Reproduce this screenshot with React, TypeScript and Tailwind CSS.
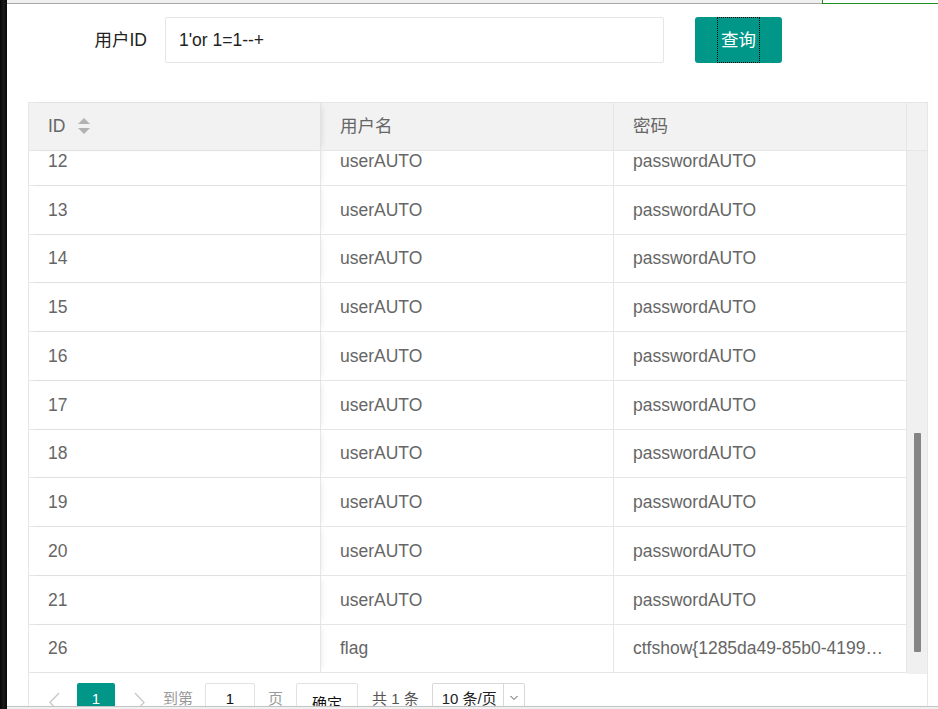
import React from "react";

const rows: [string, string, string][] = [
  ["12", "userAUTO", "passwordAUTO"],
  ["13", "userAUTO", "passwordAUTO"],
  ["14", "userAUTO", "passwordAUTO"],
  ["15", "userAUTO", "passwordAUTO"],
  ["16", "userAUTO", "passwordAUTO"],
  ["17", "userAUTO", "passwordAUTO"],
  ["18", "userAUTO", "passwordAUTO"],
  ["19", "userAUTO", "passwordAUTO"],
  ["20", "userAUTO", "passwordAUTO"],
  ["21", "userAUTO", "passwordAUTO"],
  ["26", "flag", "ctfshow{1285da49-85b0-4199…"],
];

function SortIcon() {
  return (
    <svg width="12" height="17" viewBox="0 0 12 17" className="ml-[12px]">
      <polygon points="6,0 12,6 0,6" fill="#b2b2b2" />
      <polygon points="0,10 12,10 6,16" fill="#b2b2b2" />
    </svg>
  );
}

function Chevron({ dir }: { dir: "l" | "r" }) {
  return (
    <svg width="11" height="22" viewBox="0 0 11 22" className="mt-[9px] shrink-0">
      <polyline
        points={dir === "l" ? "10,1 1,10.5 10,20" : "1,1 10,10.5 1,20"}
        fill="none"
        stroke="#c8c8c8"
        strokeWidth="1.3"
      />
    </svg>
  );
}

export default function App() {
  return (
    <div className="w-[938px] h-[709px] overflow-hidden flex bg-white font-['Liberation_Sans','Noto_Sans_CJK_SC',sans-serif]">
      <div className="w-[7px] shrink-0 bg-[linear-gradient(90deg,#050505,#1a1a1a_50%,#080808)]" />
      <div className="flex-1 flex flex-col min-w-0">
        {/* top strip */}
        <div className="h-[4px] flex shrink-0">
          <div className="w-[815px] bg-[#f0f0f0] border-b border-[#a8a8a8]" />
          <div className="flex-1 border-l border-b border-[#1f8f1f] bg-white" />
        </div>

        {/* content */}
        <div className="flex-1 min-h-0 overflow-hidden">
          {/* form row */}
          <div className="flex items-center mt-[13px] h-[46px]">
            <label className="w-[158px] pr-[18px] text-right text-[17.5px] text-[#222]">
              用户ID
            </label>
            <div className="w-[499px] h-[46px] border border-[#e6e6e6] rounded-[2px] flex items-center pl-[13px] text-[17.5px] text-[#222]">
              1'or 1=1--+
            </div>
            <button className="ml-[31px] w-[87px] h-[46px] bg-[#009688] rounded-[3px] text-white text-[17.5px] flex justify-center">
              <span className="h-full flex items-center px-[3px] border border-dotted border-black">
                查询
              </span>
            </button>
          </div>

          {/* table */}
          <div className="ml-[21px] mt-[39px] w-[900px] border-l border-r border-t border-[#e6e6e6] text-[17.5px] text-[#666]">
            {/* header */}
            <div className="flex h-[48px] bg-[#f2f2f2] border-b border-[#e6e6e6]">
              <div className="w-[292px] border-r border-[#e2e2e2] pl-[19px] flex items-center relative z-10 shadow-[3px_0_6px_-3px_rgba(0,0,0,0.12)]">
                ID
                <SortIcon />
              </div>
              <div className="w-[293px] border-r border-[#e6e6e6] pl-[19px] flex items-center">
                用户名
              </div>
              <div className="w-[293px] border-r border-[#e6e6e6] pl-[19px] flex items-center">
                密码
              </div>
              <div className="flex-1 bg-[#f2f2f2]" />
            </div>

            {/* body */}
            <div className="flex h-[523px]">
              <div className="w-[878px] overflow-hidden">
                <div className="mt-[-14px]">
                  {rows.map(([id, u, p]) => (
                    <div key={id} className="flex h-[48.75px] border-b border-[#e6e6e6]">
                      <div className="w-[292px] border-r border-[#e6e6e6] pl-[19px] flex items-center relative z-10 shadow-[3px_0_6px_-3px_rgba(0,0,0,0.1)]">
                        {id}
                      </div>
                      <div className="w-[293px] border-r border-[#e6e6e6] pl-[19px] flex items-center">
                        {u}
                      </div>
                      <div className="w-[293px] border-r border-[#e6e6e6] pl-[19px] flex items-center whitespace-nowrap overflow-hidden">
                        {p}
                      </div>
                    </div>
                  ))}
                </div>
              </div>
              <div className="flex-1 bg-[#f0f0f0] pt-[282px]">
                <div className="ml-[7px] w-[7px] h-[219px] bg-[#858585] rounded-[1px]" />
              </div>
            </div>

            {/* pagination */}
            <div className="flex items-start h-[60px] pt-[9px] text-[15px]">
              <div className="ml-[20px] flex">
                <Chevron dir="l" />
              </div>
              <div className="ml-[17px] w-[38px] h-[33px] bg-[#009688] rounded-[2px] text-white flex items-center justify-center">
                1
              </div>
              <div className="ml-[19px] flex">
                <Chevron dir="r" />
              </div>
              <span className="ml-[18px] h-[33px] flex items-center text-[#999]">到第</span>
              <div className="ml-[12px] w-[50px] h-[33px] border border-[#e2e2e2] rounded-[2px] flex items-center justify-center text-[#111]">
                1
              </div>
              <span className="ml-[13px] h-[33px] flex items-center text-[#999]">页</span>
              <div className="ml-[13px] w-[62px] h-[33px] border border-[#e2e2e2] rounded-[2px] flex justify-center pt-[9px] text-[#111]">
                确定
              </div>
              <span className="ml-[14px] h-[33px] flex items-center text-[#555]">共 1 条</span>
              <div className="ml-[13px] w-[93px] h-[33px] border border-[#d8d8d8] rounded-[2px] flex text-[#222]">
                <div className="flex-1 flex items-center pl-[9px]">10 条/页</div>
                <div className="w-[21px] border-l border-[#d8d8d8] flex justify-center pt-[11px]">
                  <svg width="8" height="6" viewBox="0 0 8 6">
                    <polyline points="0.5,1 4,4.5 7.5,1" fill="none" stroke="#555" strokeWidth="1" />
                  </svg>
                </div>
              </div>
            </div>
          </div>
        </div>

        {/* bottom strip */}
        <div className="h-[3px] shrink-0 border-t border-[#c4c4c4] bg-[#f0f0f0]" />
      </div>
    </div>
  );
}
